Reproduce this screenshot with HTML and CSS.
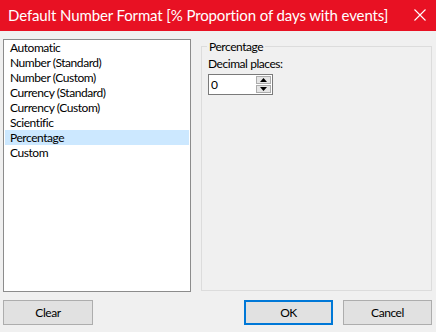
FILE: index.html
```html
<!DOCTYPE html>
<html>
<head>
<meta charset="utf-8">
<link rel="stylesheet" href="styles.css">
</head>
<body>
<div class="dialog">
  <div class="titlebar">
    <span class="title">Default Number Format [% Proportion of days with events]</span>
    <span class="close">
      <svg width="12" height="12" viewBox="0 0 12 12"><path d="M0.5 0.5 L11.5 11.5 M11.5 0.5 L0.5 11.5" stroke="#fff" stroke-width="1.1" fill="none"/></svg>
    </span>
  </div>
  <div class="main">
    <ul class="list">
      <li>Automatic</li>
      <li>Number (Standard)</li>
      <li>Number (Custom)</li>
      <li>Currency (Standard)</li>
      <li>Currency (Custom)</li>
      <li>Scientific</li>
      <li class="sel">Percentage</li>
      <li>Custom</li>
    </ul>
    <fieldset class="group">
      <legend>Percentage</legend>
      <div class="label">Decimal places:</div>
      <div class="spin">
        <span class="val">0</span>
        <span class="arrows">
          <span class="arr"><svg width="7" height="4" viewBox="0 0 7 4"><path d="M0 4 L3.5 0 L7 4 Z" fill="#000"/></svg></span>
          <span class="arr"><svg width="7" height="4" viewBox="0 0 7 4"><path d="M0 0 L3.5 4 L7 0 Z" fill="#000"/></svg></span>
        </span>
      </div>
    </fieldset>
  </div>
  <div class="footer">
    <button class="btn clear">Clear</button>
    <span class="spacer"></span>
    <button class="btn ok">OK</button>
    <button class="btn">Cancel</button>
  </div>
</div>
</body>
</html>
```

FILE: styles.css
```css
html, body {
  margin: 0;
  padding: 0;
  background: #f0f0f0;
}
body {
  font-family: Lato, "Noto Sans", sans-serif;
  font-size: 12px;
  letter-spacing: -0.45px;
  color: #000;
  width: 436px;
  height: 332px;
  overflow: hidden;
}
.titlebar {
  height: 31px;
  background: #e81123;
  display: flex;
  align-items: center;
  color: #fff;
}
.title {
  padding-left: 8px;
  font-size: 15px;
  letter-spacing: -0.12px;
  flex: 1;
  white-space: nowrap;
  margin-top: -2px;
}
.close {
  width: 12px;
  height: 12px;
  margin-right: 10px;
  margin-top: -2px;
  display: flex;
}
.main {
  display: flex;
  padding: 8px 4px 0 3px;
  height: 253px;
  gap: 10px;
}
.list {
  list-style: none;
  margin: 0;
  padding: 0 1px;
  width: 188px;
  box-sizing: border-box;
  height: 253px;
  background: #fff;
  border: 1px solid #8c8c8c;
}
.list li {
  height: 15px;
  line-height: 15px;
  padding-left: 5px;
  white-space: nowrap;
}
.list li.sel {
  background: #cce8ff;
}
.group {
  flex: 1;
  margin: 0;
  padding: 0 6px 0 6px;
  border: 1px solid #dcdcdc;
  box-sizing: border-box;
  height: 252px;
  min-width: 0;
}
.group legend {
  padding: 0 2px;
  line-height: 15px;
  margin-left: -1px;
}
.label {
  margin-top: 2px;
  line-height: 15px;
}
.spin {
  margin-top: 3px;
  width: 65px;
  height: 21px;
  box-sizing: border-box;
  border: 1px solid #7a7a7a;
  background: #fff;
  display: flex;
}
.val {
  flex: 1;
  padding-left: 2px;
  line-height: 19px;
}
.arrows {
  width: 15px;
  display: flex;
  flex-direction: column;
  padding: 1px 1px 1px 0;
  gap: 1px;
}
.arr {
  flex: 1;
  background: #e5e5e5;
  border: 1px solid #acacac;
  display: flex;
  align-items: center;
  justify-content: center;
}
.footer {
  display: flex;
  padding: 8px 4px 0 3px;
  gap: 10px;
}
.spacer {
  flex: 1;
}
.btn {
  width: 89px;
  height: 25px;
  box-sizing: border-box;
  background: #e1e1e1;
  border: 1px solid #adadad;
  font-family: Lato, "Noto Sans", sans-serif;
  font-size: 12px;
  letter-spacing: -0.45px;
  color: #000;
  padding: 0;
  margin: 0;
}
.btn.clear {
  width: 90px;
}
.btn.ok {
  border: 2px solid #0078d7;
}
```
